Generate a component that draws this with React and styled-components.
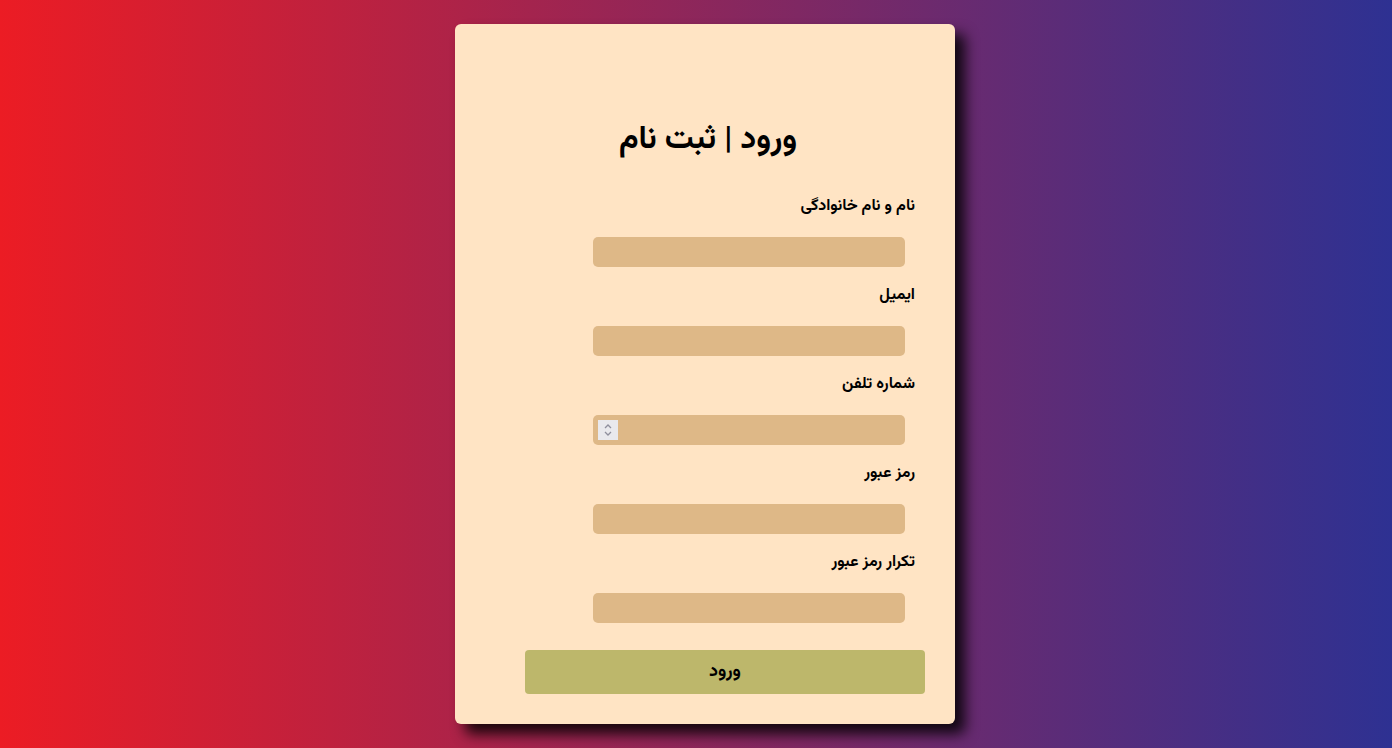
import styled, { createGlobalStyle } from 'styled-components'

const GlobalStyle = createGlobalStyle`
    * {
        box-sizing: border-box;
    }
    body {
        margin: 0;
        height: 100vh;
        background: linear-gradient(to right, #ec1c24, #2e3192);
        font-family: "Vazirmatn", "Noto Sans Arabic", "DejaVu Sans", sans-serif;
    }
`

const Page = styled.div`
    display: flex;
    justify-content: center;
    padding: 24px 0 0 18px;
`

const Card = styled.div`
    width: 500px;
    height: 700px;
    background-color: bisque;
    border-radius: 6px;
    box-shadow: 10px 10px 14px rgba(0, 0, 0, 0.85);
    direction: rtl;
    display: flex;
    flex-direction: column;
    align-items: flex-start;
    padding: 96px 30px 30px 0;
`

const Title = styled.h1`
    width: 100%;
    margin: 0 0 35px 0;
    padding-left: 36px;
    text-align: center;
    font-size: 32px;
    line-height: 40px;
    font-weight: bold;
    color: #000;
`

const Label = styled.label`
    display: block;
    margin: 0 10px 18px 0;
    font-size: 16px;
    line-height: 24px;
    font-weight: bold;
    color: #000;
`

const Field = styled.div`
    position: relative;
    margin: 0 20px 17px 0;
`

const Input = styled.input`
    display: block;
    width: 312px;
    height: 30px;
    border: none;
    outline: none;
    border-radius: 5px;
    background-color: burlywood;
    padding: 0 6px;
    font-family: inherit;
    font-size: 14px;

    &::-webkit-inner-spin-button,
    &::-webkit-outer-spin-button {
        -webkit-appearance: none;
        margin: 0;
    }
`

const Spinner = styled.span`
    position: absolute;
    left: 5px;
    top: 5px;
    width: 20px;
    height: 20px;
    background-color: #e9e9ed;
    display: flex;
    align-items: center;
    justify-content: center;
    pointer-events: none;
`

const Button = styled.button`
    width: 400px;
    height: 44px;
    margin-top: 10px;
    border: none;
    border-radius: 4px;
    background-color: darkkhaki;
    font-family: inherit;
    font-size: 18px;
    font-weight: bold;
    color: #000;
    cursor: pointer;
`

const fields = [
    {label: "نام و نام خانوادگی", type: "text"},
    {label: "ایمیل", type: "email"},
    {label: "شماره تلفن", type: "number"},
    {label: "رمز عبور", type: "password"},
    {label: "تکرار رمز عبور", type: "password"},
];

function App(){
    return(
        <>
            <GlobalStyle/>
            <Page>
                <Card>
                    <Title>ورود | ثبت نام</Title>
                    {fields.map((f) => (
                        <div key={f.label} style={{display: "contents"}}>
                            <Label>{f.label}</Label>
                            <Field>
                                <Input type={f.type}/>
                                {f.type === "number" && (
                                    <Spinner>
                                        <svg width="12" height="16" viewBox="0 0 12 16" fill="none" stroke="#8f8f9d" strokeWidth="1.3">
                                            <path d="M3 6 L6 3 L9 6"/>
                                            <path d="M3 10 L6 13 L9 10"/>
                                        </svg>
                                    </Spinner>
                                )}
                            </Field>
                        </div>
                    ))}
                    <Button>ورود</Button>
                </Card>
            </Page>
        </>
    );
}

export default App;
